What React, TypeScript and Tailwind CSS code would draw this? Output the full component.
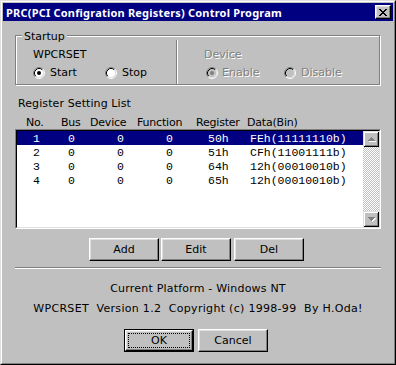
import React from "react";

const rows = [
  ["1", "0", "0", "0", "50h", "FEh(11111110b)"],
  ["2", "0", "0", "0", "51h", "CFh(11001111b)"],
  ["3", "0", "0", "0", "64h", "12h(00010010b)"],
  ["4", "0", "0", "0", "65h", "12h(00010010b)"],
];

const raised =
  "border border-t-white border-l-white border-r-black border-b-black bg-[#c0c0c0] shadow-[inset_-1px_-1px_0_#808080,inset_1px_1px_0_#dfdfdf]";

const disabledText = "text-[#808080] [text-shadow:1px_1px_0_#fff]";

function Radio({ checked, disabled }: { checked?: boolean; disabled?: boolean }) {
  return (
    <svg width="12" height="12" viewBox="0 0 12 12" className="shrink-0">
      <circle cx="6" cy="6" r="4.5" fill={disabled ? "#c0c0c0" : "#fff"} />
      <path d="M2.11 9.89A5.5 5.5 0 0 1 9.89 2.11" fill="none" stroke="#808080" />
      <path d="M9.89 2.11A5.5 5.5 0 0 1 2.11 9.89" fill="none" stroke="#fff" />
      <path d="M2.82 9.18A4.5 4.5 0 0 1 9.18 2.82" fill="none" stroke="#000" />
      <path d="M9.18 2.82A4.5 4.5 0 0 1 2.82 9.18" fill="none" stroke="#dfdfdf" />
      {checked && <circle cx="6" cy="6" r="2" fill={disabled ? "#808080" : "#000"} />}
    </svg>
  );
}

function ScrollBtn({ dir }: { dir: "up" | "down" }) {
  const d =
    dir === "up"
      ? "M8 6h1v1H8zM7 7h3v1H7zM6 8h5v1H6zM5 9h7v1H5z"
      : "M5 6h7v1H5zM6 7h5v1H6zM7 8h3v1H7zM8 9h1v1H8z";
  return (
    <div className="h-[16px] w-[16px] bg-[#c0c0c0] shadow-[inset_1px_1px_0_#dfdfdf,inset_-1px_-1px_0_#000,inset_2px_2px_0_#fff,inset_-2px_-2px_0_#808080]">
      <svg width="16" height="16" viewBox="0 0 16 16" shapeRendering="crispEdges">
        <path d={d} fill="#fff" transform="translate(1 1)" />
        <path d={d} fill="#808080" />
      </svg>
    </div>
  );
}

export default function App() {
  return (
    <div className="h-[365px] w-[396px] bg-[#c0c0c0] text-[11px] leading-[13px] text-black">
      <div className="h-full w-full border border-t-[#dfdfdf] border-l-[#dfdfdf] border-r-black border-b-black">
        <div className="flex h-full flex-col border border-t-white border-l-white border-r-[#808080] border-b-[#808080] p-px">
          {/* Title bar */}
          <div className="flex h-[18px] shrink-0 items-center justify-between bg-[#000080] pl-[3px] pr-[2px]">
            <span className="font-sans text-[11px] font-bold tracking-[0.2px] text-white">
              PRC(PCI Configration Registers) Control Program
            </span>
            <div className={"flex h-[14px] w-[16px] items-center justify-center " + raised}>
              <svg width="8" height="7" viewBox="0 0 8 7" shapeRendering="crispEdges">
                <path
                  d="M0 0h2v1H0zM6 0h2v1H6zM1 1h2v1H1zM5 1h2v1H5zM2 2h4v1H2zM3 3h2v1H3zM2 4h4v1H2zM1 5h2v1H1zM5 5h2v1H5zM0 6h2v1H0zM6 6h2v1H6z"
                  fill="#000"
                />
              </svg>
            </div>
          </div>

          <div className="flex flex-col [font-family:DejaVu_Sans]">
            {/* Startup group */}
            <div className="relative ml-[12px] mt-[14px] flex h-[50px] w-[365px] border border-[#808080] shadow-[inset_1px_1px_0_#fff,1px_1px_0_#fff]">
              <span className="absolute left-[6px] top-[-6px] bg-[#c0c0c0] px-[2px]">Startup</span>

              <div className="flex w-[160px] flex-col pl-[17px] pt-[12px]">
                <div>WPCRSET</div>
                <div className="mt-[5px] flex h-[13px] items-center">
                  <div className="flex w-[72px] items-center gap-[5px]">
                    <Radio checked />
                    <span>Start</span>
                  </div>
                  <div className="flex items-center gap-[5px]">
                    <Radio />
                    <span>Stop</span>
                  </div>
                </div>
              </div>

              <div className="mt-[4px] w-[2px] border-l border-r border-l-[#808080] border-r-white" />

              <div className="flex flex-col pt-[12px]">
                <div className={"pl-[26px] " + disabledText}>Device</div>
                <div className="mt-[5px] flex h-[13px] items-center pl-[28px]">
                  <div className="flex w-[78px] items-center gap-[4px]">
                    <Radio checked disabled />
                    <span className={disabledText}>Enable</span>
                  </div>
                  <div className="flex items-center gap-[5px]">
                    <Radio disabled />
                    <span className={disabledText}>Disable</span>
                  </div>
                </div>
              </div>
            </div>

            {/* Register list */}
            <div className="ml-[12px] mt-[12px] pl-[3px] tracking-[0.1px]">Register Setting List</div>
            <div className="ml-[12px] mt-[6px] flex pl-[11px] tracking-[-0.2px]">
              <span className="w-[35px]">No.</span>
              <span className="w-[29px]">Bus</span>
              <span className="w-[47px]">Device</span>
              <span className="w-[59px]">Function</span>
              <span className="w-[51px]">Register</span>
              <span>Data(Bin)</span>
            </div>

            <div className="ml-[12px] h-[100px] w-[366px] shrink-0 border border-t-[#808080] border-l-[#808080] border-b-white border-r-white">
              <div className="flex h-full border border-t-black border-l-black border-b-[#dfdfdf] border-r-[#dfdfdf] bg-white">
                <div className="flex-1 font-mono text-[11.5px]">
                  {rows.map((r, i) => (
                    <div
                      key={i}
                      className={
                        "flex h-[14px] pl-[16px] leading-[16px] " +
                        (i === 0 ? "bg-[#000080] text-white" : "text-black")
                      }
                    >
                      <span className="w-[35px]">{r[0]}</span>
                      <span className="w-[49px]">{r[1]}</span>
                      <span className="w-[49px]">{r[2]}</span>
                      <span className="w-[42px]">{r[3]}</span>
                      <span className="w-[42px]">{r[4]}</span>
                      <span>{r[5]}</span>
                    </div>
                  ))}
                </div>
                <div className="flex w-[16px] flex-col">
                  <ScrollBtn dir="up" />
                  <div className="flex-1 bg-[image:repeating-conic-gradient(#c0c0c0_0_25%,#fff_0_50%)] bg-[length:2px_2px]" />
                  <ScrollBtn dir="down" />
                </div>
              </div>
            </div>

            {/* Add / Edit / Del */}
            <div className="mt-[9px] flex">
              <div className={"ml-[86px] flex h-[23px] w-[70px] items-center justify-center " + raised}>Add</div>
              <div className={"ml-[2px] flex h-[23px] w-[70px] items-center justify-center " + raised}>Edit</div>
              <div className={"ml-[3px] flex h-[23px] w-[70px] items-center justify-center " + raised}>Del</div>
            </div>

            <div className="ml-[12px] mt-[6px] h-[2px] w-[366px] border-t border-b border-t-[#808080] border-b-white" />

            {/* Footer */}
            <div className="mt-[13px] text-center tracking-[0.2px]">Current Platform - Windows NT</div>
            <div className="mt-[7px] whitespace-pre text-center tracking-[0.3px]">
              WPCRSET  Version 1.2  Copyright (c) 1998-99  By H.Oda!
            </div>

            <div className="mt-[14px] flex">
              <div className="ml-[121px] h-[23px] w-[70px] border border-black">
                <div className={"flex h-full w-full p-[2px] " + raised}>
                  <span className="flex flex-1 items-center justify-center border border-dotted border-black">OK</span>
                </div>
              </div>
              <div className={"ml-[4px] flex h-[23px] w-[70px] items-center justify-center " + raised}>Cancel</div>
            </div>
          </div>
        </div>
      </div>
    </div>
  );
}
